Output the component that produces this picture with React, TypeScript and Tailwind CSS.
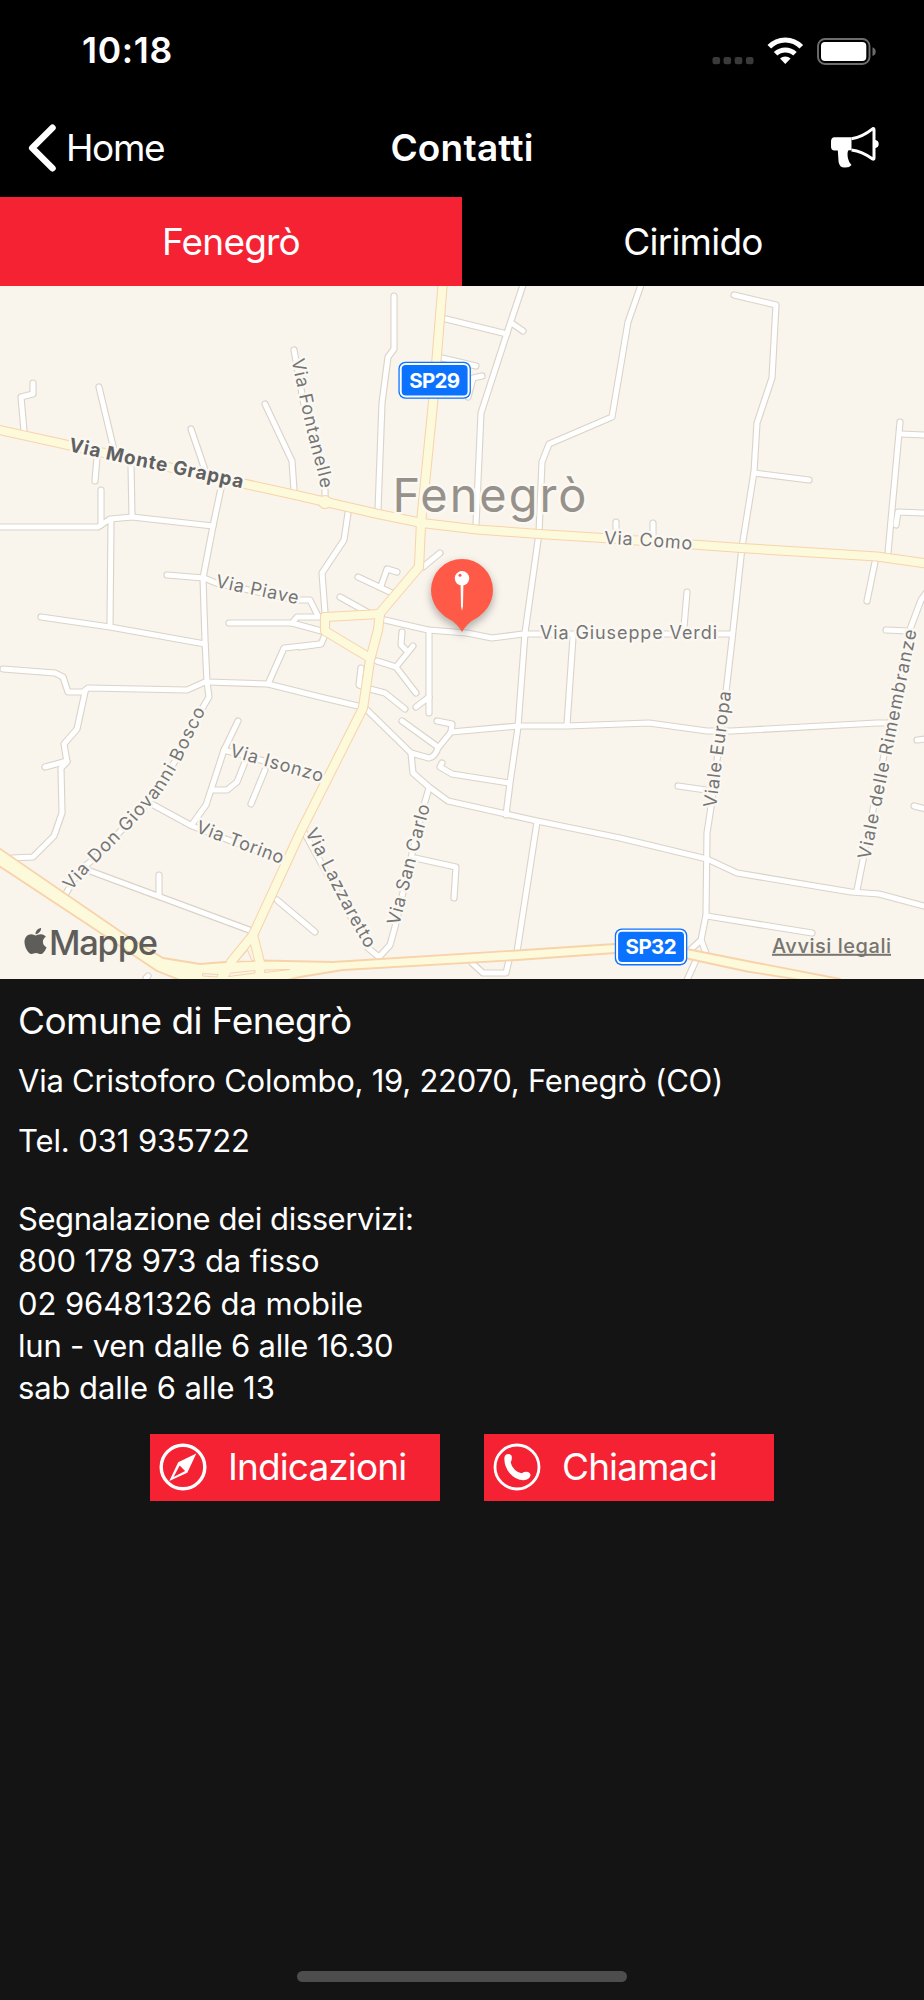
import { FaApple } from "react-icons/fa";

const STREETS = [
  "M33 383V394L21 397L24 431",
  "M99 387L114 450",
  "M97 457L95 481",
  "M101 490V525",
  "M131 464L132 516",
  "M0 527H98L110 519L132 517L213 526",
  "M111 520L110 626",
  "M191 429L205 470",
  "M221 488L213 526L203 578L205 640L207 682L209 697L200 712L181 752L150 800L95 858L80 870L65 895",
  "M167 575L204 578L216 583L296 600L310 600L318 616",
  "M41 617L110 627L205 644",
  "M265 404L292 461L294 490",
  "M294 350L303 400L325 490V500",
  "M229 623H292L297 617H325",
  "M292 623L325 632",
  "M394 296V349L388 357L382 403L378 510",
  "M446 319L507 334",
  "M523 285L508 330L481 413L476 525",
  "M513 324L523 331",
  "M442 358L476 366",
  "M482 376L473 378L468 397",
  "M641 285L628 322L612 417L549 444L542 462L539 533L525 633L518 727L510 783L506 815",
  "M616 522V535",
  "M348 513L344 540L322 573L325 613",
  "M440 553L423 567",
  "M358 577L392 593",
  "M397 572L387 569L381 586",
  "M340 597L367 612",
  "M385 620L428 630L467 633L492 638L523 634H732",
  "M402 632L401 645L406 650",
  "M429 630V713",
  "M429 697L416 707",
  "M413 646L396 667L416 693",
  "M377 661L396 667",
  "M361 668L359 685L366 688L385 693L405 709",
  "M402 721L438 747",
  "M367 710L411 753L429 758Q435 757 438 748L451 732L452 724L437 721",
  "M451 732L518 726H567L649 723L707 731H731L877 723H888",
  "M573 637L567 725",
  "M442 763L440 767L452 774L509 783",
  "M411 753L413 773L429 787L448 801L506 814L537 821L620 838L707 859L737 873L851 892L879 894L924 906",
  "M429 788L422 812L410 862L395 927L390 945L379 957L368 948L304 832",
  "M415 858L456 867L454 898",
  "M537 822L517 952",
  "M509 960L506 973H483L472 963",
  "M277 900L315 932",
  "M300 647L321 644L325 635",
  "M207 682L268 684L320 697L358 706",
  "M268 684L284 648L320 644",
  "M3 669L55 673L63 677L68 692H83L88 688L187 690L205 682",
  "M85 692L77 729L64 744L67 762L61 768L62 813L54 836L33 857L12 858",
  "M45 767L67 761",
  "M238 721L224 750L206 805L193 823",
  "M224 750L315 775",
  "M245 762L237 782L227 790H213",
  "M265 770L251 804",
  "M148 802L192 826L275 858",
  "M82 868L252 931",
  "M159 875V896",
  "M734 295L776 305L772 378L757 423L754 472L742 547L732 640L726 692L711 807L707 833L706 915L701 940L706 953",
  "M701 940L689 951",
  "M697 958L687 980",
  "M754 473L809 480",
  "M900 422L888 553",
  "M901 434L924 435",
  "M896 525L898 512L924 513",
  "M875 562L867 601",
  "M687 592L684 627",
  "M653 523V537",
  "M886 630L909 631",
  "M926 593L921 600L909 632L888 735L863 860L857 890",
  "M678 786L706 790",
  "M917 740L926 739",
  "M914 806L926 809",
  "M707 916L812 933",
  "M146 978L148 976",
];

const MAIN_ROADS = [
  "M-5 429L300 496L378 514L422 523L477 529.5L539 534L603 538L741 548L877 556.5L930 564",
  "M443 280L433 403L421 523L419 567L380 613L378 630L370 660L363 708L300 833L253 935L231 962",
  "M325 617L380 614",
  "M325 617V631L370 658",
  "M253 935L260 963",
];

const HIGHWAY =
  "M-4 846L130 938L163 958L200 964L225 962L262 960.5L333 962L517 950.5L615 944L687 949L747 961L840 979V986L747 971.5L687 958.5L615 953L517 960L343 970L300 977L270 984H190L157 971L93 928L-4 864Z";

type StreetLabel = {
  id: string;
  text: string;
  path: string;
  length: number;
  bold?: boolean;
};

const LABELS: StreetLabel[] = [
  { id: "grappa", text: "Via Monte Grappa", path: "M68 451L250 490", length: 178, bold: true },
  { id: "fontanelle", text: "Via Fontanelle", path: "M291.5 360L300 400L309 440L319 478L322 496", length: 132 },
  { id: "piave", text: "Via Piave", path: "M215 587L302 605", length: 84 },
  { id: "como", text: "Via Como", path: "M604 544L640 545.5L697 550", length: 88 },
  { id: "verdi", text: "Via Giuseppe Verdi", path: "M540 639H725", length: 177 },
  { id: "bosco", text: "Via Don Giovanni Bosco", path: "M71 891L95 864L128 831L150 806L163 791L181 761L209 703", length: 227 },
  { id: "isonzo", text: "Via Isonzo", path: "M229 756L328 784", length: 96 },
  { id: "torino", text: "Via Torino", path: "M195 832L289 867", length: 92 },
  { id: "lazzaretto", text: "Via Lazzaretto", path: "M305 832L322 866L336 894L350 921L370 956", length: 132 },
  { id: "carlo", text: "Via San Carlo", path: "M399 926L432 798", length: 124 },
  { id: "europa", text: "Viale Europa", path: "M716 808L732 684", length: 117 },
  { id: "rimembranze", text: "Viale delle Rimembranze", path: "M870 860L918 624", length: 234 },
];

function RoadShield({ x, y, name }: { x: number; y: number; name: string }) {
  return (
    <g>
      <rect x={x} y={y} width="72.5" height="37" rx="7" fill="#0b72ff" />
      <rect x={x + 1.3} y={y + 1.3} width="69.9" height="34.4" rx="6" fill="#fff" />
      <rect x={x + 3.3} y={y + 3.3} width="65.9" height="30.4" rx="4" fill="#0b72ff" />
      <text
        x={x + 36.3}
        y={y + 25.9}
        textAnchor="middle"
        textLength="51"
        fontSize="20.5"
        fontWeight="700"
        fill="#fff"
      >
        {name}
      </text>
    </g>
  );
}

function MapPin() {
  return (
    <g>
      <path
        d="M462 559A31 31 0 0 0 431 590C431 604 440 614 449 619C455 622 459 627 462 632C465 627 469 622 475 619C484 614 493 604 493 590A31 31 0 0 0 462 559Z"
        fill="#ff5a48"
        className="drop-shadow-[0_4px_4px_rgba(0,0,0,0.3)]"
      />
      <path d="M460.6 584H463.4L463 606L462 611L461 606Z" fill="#fff" />
      <circle cx="462" cy="578.3" r="7.2" fill="#fff" />
      <circle cx="460" cy="575.3" r="1.5" fill="#ff5a48" />
    </g>
  );
}

function TownMap() {
  return (
    <div className="relative h-[693px] overflow-hidden bg-[#f9f4ec]">
      <svg viewBox="0 286 924 693" className="block h-full w-full">
        <g fill="none" strokeLinecap="round" strokeLinejoin="round">
          <g stroke="#dad3c8" strokeWidth="7.2">
            {STREETS.map((d) => (
              <path key={d} d={d} />
            ))}
          </g>
          <g stroke="#fff" strokeWidth="5">
            {STREETS.map((d) => (
              <path key={d} d={d} />
            ))}
          </g>
          <g stroke="#f8d3aa" strokeWidth="10.2">
            {MAIN_ROADS.map((d) => (
              <path key={d} d={d} />
            ))}
            <circle cx="325" cy="502" r="2" />
          </g>
          <path d={HIGHWAY} stroke="#f8d3aa" strokeWidth="1.8" fill="#fcfadb" />
          <g stroke="#fcfadb" strokeWidth="8.2">
            {MAIN_ROADS.map((d) => (
              <path key={d} d={d} />
            ))}
            <circle cx="325" cy="502" r="2" />
          </g>
          <g stroke="#f8d3aa" strokeWidth="1" fill="#f9f4ec">
            <path d="M238 961L247.5 950L252 961Z" />
            <path d="M203 973.5L218 974.5L217 977L203 976Z" />
            <path d="M231 973L255 970.5V973L229 976.5Z" />
            <path d="M265 970L290 969.5L265 972.5Z" />
          </g>
        </g>

        <g
          fontFamily="Inter, sans-serif"
          fill="#757575"
          stroke="#fbf8f2"
          strokeWidth="5"
          strokeLinejoin="round"
          className="[paint-order:stroke]"
        >
          <text x="392.5" y="511.7" fontSize="47" textLength="194" fill="#96928b">
            Fenegrò
          </text>
          {LABELS.map(({ id, text, path, length, bold }) => (
            <g key={id}>
              <path id={id} d={path} fill="none" stroke="none" />
              <text
                fontSize={bold ? 19 : 18}
                fontWeight={bold ? 700 : 400}
                fill={bold ? "#616161" : undefined}
              >
                <textPath href={`#${id}`} textLength={length}>
                  {text}
                </textPath>
              </text>
            </g>
          ))}
        </g>

        <g fontFamily="Inter, sans-serif">
          <RoadShield x={398.4} y={361.7} name="SP29" />
          <RoadShield x={614.8} y={928.4} name="SP32" />
          <text x="49" y="954.8" fontSize="34.5" fontWeight="500" textLength="109" fill="#5f5d59">
            Mappe
          </text>
          <text x="772" y="952.5" fontSize="20" fontWeight="500" textLength="119" fill="#77756f">
            Avvisi legali
          </text>
          <rect x="772" y="953.8" width="119" height="2" fill="#77756f" />
        </g>
        <MapPin />
      </svg>
      <FaApple className="absolute top-[640px] left-[21px] h-[30px] w-[29px] text-[#5f5d59]" />
    </div>
  );
}

function StatusIcons() {
  return (
    <svg viewBox="712 30 166 40" className="h-[40px] w-[166px]" fill="none">
      <g fill="#3a3a3a">
        <rect x="712.5" y="56" width="7.6" height="7.2" rx="2.2" />
        <rect x="723.5" y="56" width="7.6" height="7.2" rx="2.2" />
        <rect x="734.7" y="56" width="7.6" height="7.2" rx="2.2" />
        <rect x="745.9" y="56" width="7.6" height="7.2" rx="2.2" />
      </g>
      <g stroke="#fff" strokeWidth="5">
        <path d="M769.3 45.8A22 22 0 0 1 801.3 45.8" />
        <path d="M775.6 52.8A14 14 0 0 1 795 52.8" />
      </g>
      <path d="M785.3 63L780 57.6A8 8 0 0 1 790.6 57.6Z" fill="#fff" />
      <rect x="818" y="38" width="51.5" height="25" rx="7" stroke="#6d6d6d" strokeWidth="1.9" />
      <rect x="821" y="41" width="45.3" height="19" rx="4" fill="#fff" />
      <path d="M872.5 46.3Q875.7 47.5 875.7 50.7T872.5 55Z" fill="#6d6d6d" />
    </svg>
  );
}

function Megaphone() {
  return (
    <svg viewBox="830 124 50 44" className="h-[44px] w-[50px]">
      <path
        d="M834.5 135.3H851.5V148.3H848.5Q846.8 150.5 848 156.5Q848.8 160.5 851.5 163Q849.5 165.8 844.5 165.5Q839.5 165.5 838.6 160L837.8 148.5H834.5Q831 148.3 831 144.5V139.5Q831 135.5 834.5 135.3Z"
        fill="#fff"
      />
      <path
        d="M851.5 136.7Q862 135.3 872.9 126.6Q874 126 874 128V156Q874 157.8 872.6 157Q862 149 851.5 147.9"
        fill="none"
        stroke="#fff"
        strokeWidth="3"
      />
      <path d="M874.5 137.8Q878.7 138.3 878.7 142T874.5 146.2Z" fill="#fff" />
    </svg>
  );
}

function CompassIcon() {
  return (
    <svg viewBox="0 0 48 48" className="h-[48px] w-[48px]">
      <circle cx="24" cy="24" r="21.8" fill="none" stroke="#fff" strokeWidth="3.4" />
      <path d="M37.3 10.5L28.3 29.7L10.3 38L19.2 19.2Z" fill="#fff" />
      <path d="M20.7 22.5L26.1 28L14.6 34Z" fill="#f52234" />
    </svg>
  );
}

function PhoneIcon() {
  return (
    <svg viewBox="0 0 48 48" className="h-[48px] w-[48px]">
      <circle cx="24" cy="24" r="22" fill="none" stroke="#fff" strokeWidth="2.8" />
      <path
        d="M11.5 14Q12.2 11.2 15.4 11Q18.6 11.2 18.9 14.2Q19 17 17.7 19.3Q18.2 23.5 22 27Q25.3 30 28.6 30.2Q32 28.4 35 29Q37.8 30 37.5 32.4Q36.4 36.2 32 37.1Q23 37.8 16.5 30Q10.6 22.5 11.5 14Z"
        fill="#fff"
      />
    </svg>
  );
}

export default function App() {
  return (
    <div className="flex h-[2000px] w-[924px] flex-col bg-[#141414] font-[Inter,sans-serif] text-white">
      <header className="bg-black">
        <div className="flex h-[101px] items-center justify-between pr-[46px] pl-[82px]">
          <span className="text-[35.5px] font-semibold tracking-[0.7px]">10:18</span>
          <StatusIcons />
        </div>
        <nav className="grid h-[96px] grid-cols-3 items-center pr-[44px] pb-[3px] pl-[28px]">
          <div className="flex items-center gap-[9px]">
            <svg viewBox="0 0 29 48" className="h-[48px] w-[29px]">
              <path
                d="M24.5 3.8L4.2 24L24.5 44.2"
                fill="none"
                stroke="#fff"
                strokeWidth="6.5"
                strokeLinecap="round"
                strokeLinejoin="round"
              />
            </svg>
            <span className="text-[37px] tracking-[-1.4px]">Home</span>
          </div>
          <h1 className="pl-[16px] text-center text-[37px] font-semibold tracking-[0.2px]">
            Contatti
          </h1>
          <div className="flex justify-end">
            <Megaphone />
          </div>
        </nav>
        <div className="grid h-[89px] grid-cols-2 text-[37px] leading-[88px] tracking-[-0.8px]">
          <button className="bg-[#f52234]">Fenegrò</button>
          <button>Cirimido</button>
        </div>
      </header>

      <TownMap />

      <main className="px-[18px] pt-[18px] text-[31px] leading-[42.4px]">
        <h2 className="text-[37px] leading-[48px] tracking-[-0.55px]">Comune di Fenegrò</h2>
        <p className="mt-[15px] tracking-[-0.24px]">
          Via Cristoforo Colombo, 19, 22070, Fenegrò (CO)
        </p>
        <p className="mt-[17.5px] tracking-[-0.1px]">Tel. 031 935722</p>
        <div className="mt-[35.5px]">
          <p className="tracking-[-0.42px]">Segnalazione dei disservizi:</p>
          <p className="tracking-[-0.1px]">800 178 973 da fisso</p>
          <p className="tracking-[-0.07px]">02 96481326 da mobile</p>
          <p className="tracking-[-0.19px]">lun - ven dalle 6 alle 16.30</p>
          <p className="tracking-[-0.1px]">sab dalle 6 alle 13</p>
        </div>
      </main>

      <div className="mt-[24px] flex justify-center gap-[44px] text-[37px] leading-[65px] tracking-[-0.9px]">
        <button className="flex h-[67px] w-[290px] items-center gap-[21px] bg-[#f52234] pl-[9px]">
          <CompassIcon />
          <span className="pb-[2px]">Indicazioni</span>
        </button>
        <button className="flex h-[67px] w-[290px] items-center gap-[21px] bg-[#f52234] pl-[9px]">
          <PhoneIcon />
          <span className="pb-[2px]">Chiamaci</span>
        </button>
      </div>

      <div className="mx-auto mt-auto mb-[18px] h-[11px] w-[330px] rounded-full bg-[#4d4d4d]" />
    </div>
  );
}
